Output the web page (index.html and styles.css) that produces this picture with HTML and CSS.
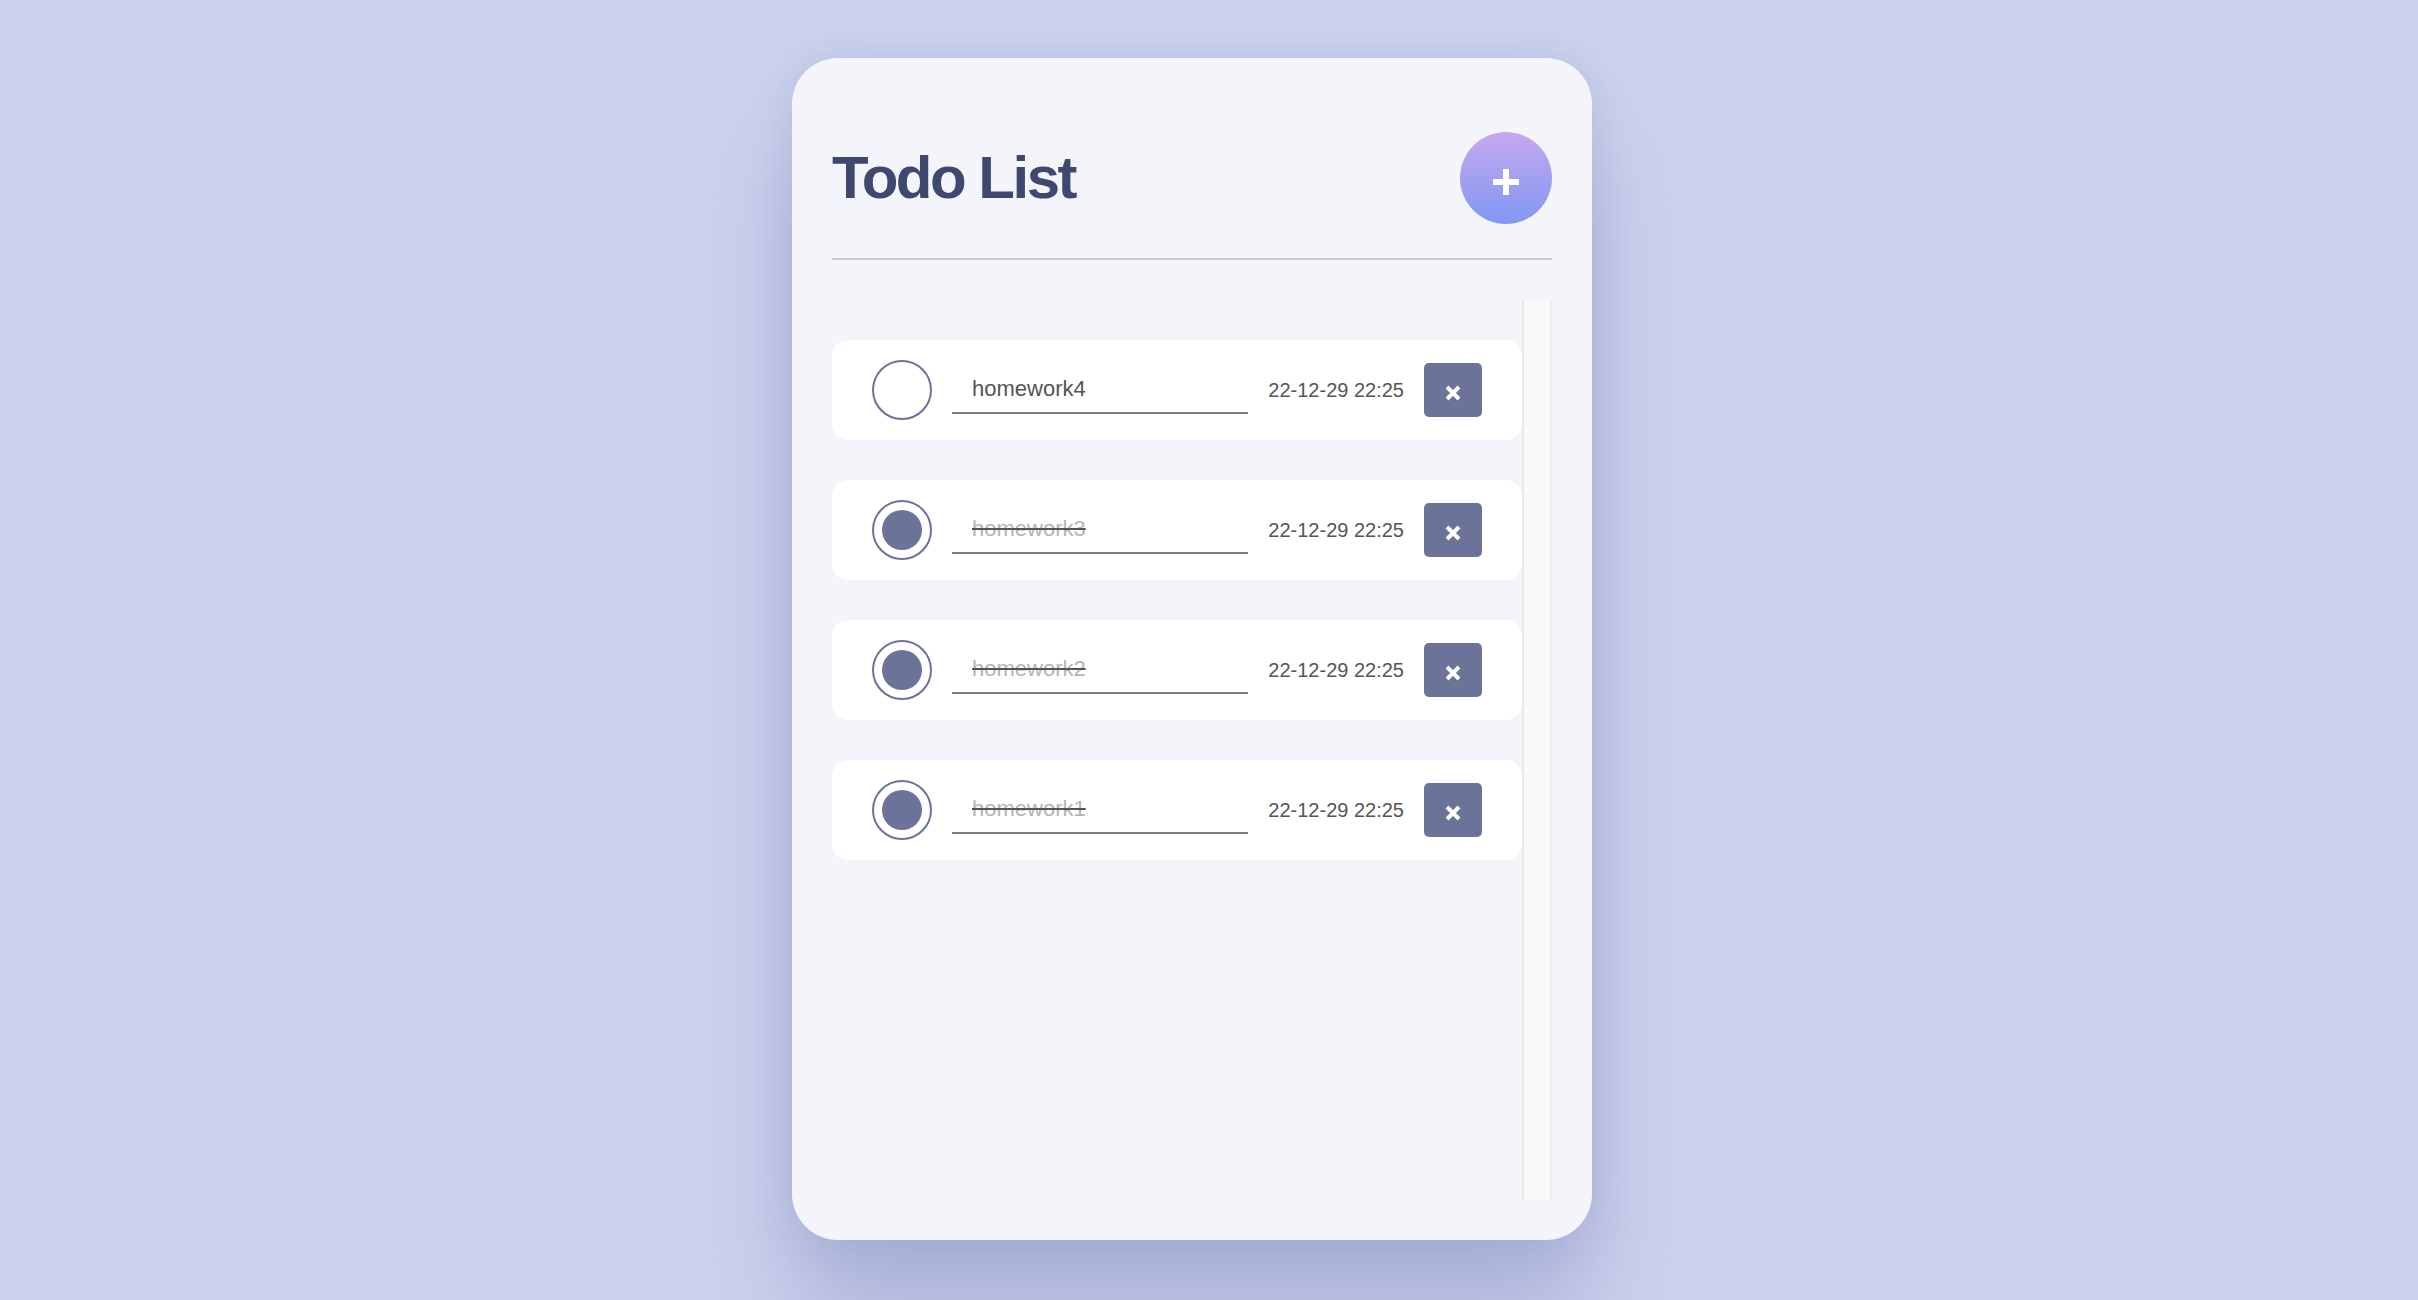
FILE: index.html
```html
<!doctype html>
<html lang="en">

<head>
    <meta charset="utf-8">
    <meta name="viewport" content="width=device-width, initial-scale=1">
    <title>Todo List</title>
    <link rel="stylesheet" href="styles.css">
</head>

<body>
    <div class="todo-card">
        <div class="todo-header">
            <h1 class="todo-title">Todo List</h1>
            <button class="add-btn" aria-label="Add">
                <svg width="26" height="26" viewBox="0 0 26 26"><path d="M13 0V26M0 13H26" stroke="#fff" stroke-width="6"/></svg>
            </button>
        </div>
        <hr class="todo-divider">

        <div class="todo-body">
            <ul class="todo-list">
                <li class="todo-item">
                    <span class="check"></span>
                    <span class="todo-text">homework4</span>
                    <span class="todo-date">22-12-29 22:25</span>
                    <button class="delete-btn" aria-label="Delete">
                        <svg width="16" height="16" viewBox="0 0 16 16"><path d="M2 2L14 14M14 2L2 14" stroke="#fff" stroke-width="4"/></svg>
                    </button>
                </li>
                <li class="todo-item">
                    <span class="check done"></span>
                    <span class="todo-text done">homework3</span>
                    <span class="todo-date">22-12-29 22:25</span>
                    <button class="delete-btn" aria-label="Delete">
                        <svg width="16" height="16" viewBox="0 0 16 16"><path d="M2 2L14 14M14 2L2 14" stroke="#fff" stroke-width="4"/></svg>
                    </button>
                </li>
                <li class="todo-item">
                    <span class="check done"></span>
                    <span class="todo-text done">homework2</span>
                    <span class="todo-date">22-12-29 22:25</span>
                    <button class="delete-btn" aria-label="Delete">
                        <svg width="16" height="16" viewBox="0 0 16 16"><path d="M2 2L14 14M14 2L2 14" stroke="#fff" stroke-width="4"/></svg>
                    </button>
                </li>
                <li class="todo-item">
                    <span class="check done"></span>
                    <span class="todo-text done">homework1</span>
                    <span class="todo-date">22-12-29 22:25</span>
                    <button class="delete-btn" aria-label="Delete">
                        <svg width="16" height="16" viewBox="0 0 16 16"><path d="M2 2L14 14M14 2L2 14" stroke="#fff" stroke-width="4"/></svg>
                    </button>
                </li>
            </ul>
            <div class="scroll-track"></div>
        </div>
    </div>
</body>

</html>
```

FILE: styles.css
```css
body{
    margin: 0;
    height: 1300px;
    overflow: hidden;
    background: #cdd3ee;
    display: flex;
    justify-content: center;
    align-items: flex-start;
    padding: 58px 34px 0 0;
    box-sizing: border-box;
    font-family: "Liberation Sans", Arial, sans-serif;
}
.todo-card{
    width: 800px;
    height: 1182px;
    box-sizing: border-box;
    padding: 74px 40px 40px;
    background: #f4f5fa;
    border-radius: 46px;
    box-shadow: 0 0 40px rgba(100, 110, 170, 0.18), 0 80px 100px rgba(100, 110, 170, 0.32);
    display: flex;
    flex-direction: column;
}
.todo-header{
    height: 92px;
    display: flex;
    align-items: center;
    justify-content: space-between;
}
.todo-title{
    margin: 0;
    font-size: 60px;
    line-height: 60px;
    font-weight: bold;
    letter-spacing: -2.5px;
    color: #404870;
}
.add-btn{
    width: 92px;
    height: 92px;
    border: none;
    padding: 0;
    border-radius: 50%;
    background: linear-gradient(#c4a8ee, #8298f3);
    display: flex;
    align-items: center;
    justify-content: center;
}
.add-btn svg{
    margin-top: 8px;
}
.todo-divider{
    margin: 34px 0 0;
    border: none;
    height: 2px;
    background: #cccccc;
}
.todo-body{
    margin-top: 40px;
    height: 900px;
    display: flex;
}
.todo-list{
    flex: 1;
    list-style: none;
    margin: 0;
    padding: 40px 0 0;
    overflow: hidden;
    display: flex;
    flex-direction: column;
    gap: 40px;
}
.scroll-track{
    width: 30px;
    box-sizing: border-box;
    background: #f9f9f9;
    border-left: 2px solid #e9e9e9;
    border-right: 2px solid #efefef;
}
.todo-item{
    flex: none;
    height: 100px;
    box-sizing: border-box;
    padding: 0 40px;
    background: #ffffff;
    border-radius: 16px;
    display: flex;
    align-items: center;
    gap: 20px;
}
.check{
    flex: none;
    width: 60px;
    height: 60px;
    box-sizing: border-box;
    border: 2px solid #6b7399;
    border-radius: 50%;
    padding: 8px;
    background: #fff;
}
.check.done{
    background: #6b7399;
    background-clip: content-box;
}
.todo-text{
    width: 297px;
    height: 48px;
    box-sizing: border-box;
    padding-left: 20px;
    line-height: 46px;
    font-size: 22px;
    color: #555555;
    border-bottom: 2px solid #857878;
}
.todo-text.done{
    color: #b5b5b5;
    text-decoration: line-through;
    text-decoration-color: #555555;
}
.todo-date{
    font-size: 20px;
    color: #555555;
    white-space: nowrap;
}
.delete-btn{
    flex: none;
    width: 58px;
    height: 54px;
    border: none;
    padding: 0;
    border-radius: 5px;
    background: #6b7399;
    display: flex;
    align-items: center;
    justify-content: center;
}
.delete-btn svg{
    margin-top: 6px;
}
```
